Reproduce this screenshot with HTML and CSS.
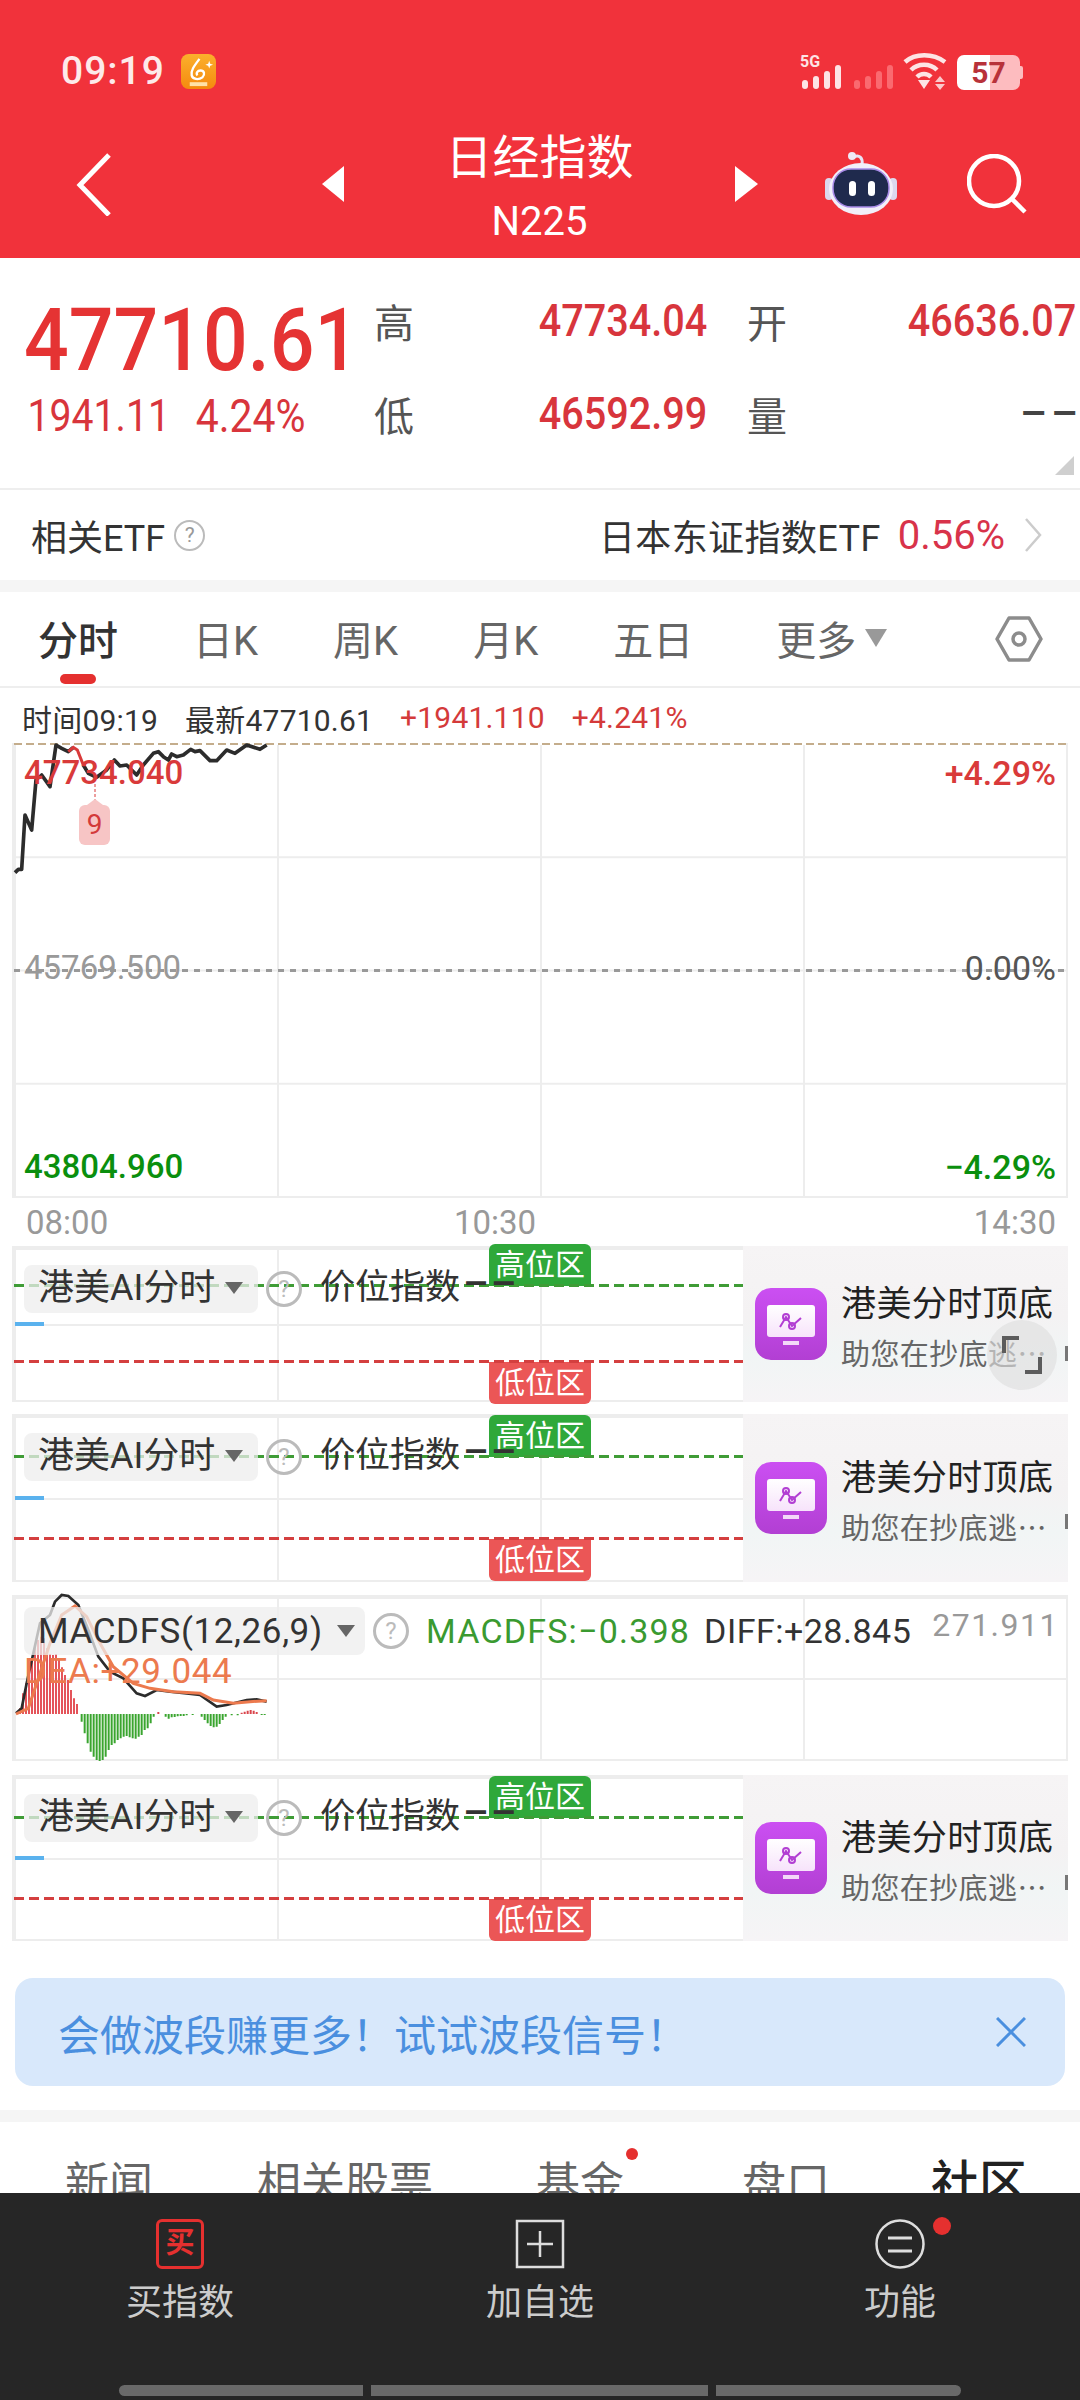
FILE: index.html
```html
<!DOCTYPE html>
<html lang="zh-CN">
<head>
    <meta charset="UTF-8">
    <meta name="viewport" content="width=device-width, initial-scale=1.0">
    <title>日经指数 N225</title>
    <link rel="stylesheet" href="styles.css">
</head>
<body>

    <!-- Red header -->
    <header id="top">
        <div class="status-bar">
            <span class="clock">09:19</span>
            <svg class="app-badge" viewBox="0 0 36 36">
                <defs>
                    <linearGradient id="orange" x1="0" y1="0" x2="0" y2="1">
                        <stop offset="0" stop-color="#fbb02c"/>
                        <stop offset="1" stop-color="#f58a0f"/>
                    </linearGradient>
                </defs>
                <rect width="36" height="36" rx="8" fill="url(#orange)"/>
                <path d="M19 5c-6 8-9 12-8 17 1 4 7 5 11 2 3-3 2-7-2-7-3 0-5 3-3 5" fill="none" stroke="#fff" stroke-width="2.4"/>
                <path d="M29 7l1 3 3 1-3 1-1 3-1-3-3-1 3-1z" fill="#fff"/>
                <rect x="9" y="29" width="18" height="4" fill="#ffe2a8"/>
            </svg>
            <div class="status-icons">
                <div class="signal-wrap">
                    <span class="net-label">5G</span>
                    <div class="signal"><i class="b1"></i><i class="b2"></i><i class="b3"></i><i class="b4"></i></div>
                </div>
                <div class="signal signal-off"><i class="b1"></i><i class="b2"></i><i class="b3"></i><i class="b4"></i></div>
                <svg class="wifi" width="44" height="38" viewBox="0 0 44 38">
                    <g fill="none" stroke="#fde4e5" stroke-width="4.5">
                        <path d="M2 10C12 1 30 1 42 10"/>
                        <path d="M8 18C15 11 27 11 34 18"/>
                        <path d="M14 25C18 21 24 21 28 25"/>
                    </g>
                    <path d="M15 28h12l-6 9z" fill="#fde4e5"/>
                    <path d="M37 24l5 6H32zM37 38l5-6H32z" fill="#fbc9cb"/>
                </svg>
                <div class="battery"><span class="battery-num">57</span></div>
            </div>
        </div>
        <nav class="nav">
            <svg class="back" width="35" height="63" viewBox="0 0 35 63"><path d="M33 2L4 32l29 30" fill="none" stroke="#fff" stroke-width="5"/></svg>
            <span class="arrow arrow-left"></span>
            <div class="nav-title">
                <div class="title-cn">日经指数</div>
                <div class="title-code">N225</div>
            </div>
            <span class="arrow arrow-right"></span>
            <svg class="robot" width="72" height="64" viewBox="0 0 72 64">
                <path d="M29 5c5-3 9 1 8 7" fill="none" stroke="#e8e4f5" stroke-width="3"/>
                <circle cx="27" cy="4" r="4" fill="#efeaf7"/>
                <rect x="0" y="26" width="8" height="22" rx="4" fill="#dcd8ee"/>
                <rect x="64" y="26" width="8" height="22" rx="4" fill="#dcd8ee"/>
                <ellipse cx="36" cy="37" rx="32" ry="26" fill="#f2eff9"/>
                <rect x="8" y="17" width="56" height="38" rx="18" fill="#1f2a4d" stroke="#a98be8" stroke-width="1.5"/>
                <rect x="24" y="29" width="7" height="15" rx="3.5" fill="#fff"/>
                <rect x="43" y="29" width="7" height="15" rx="3.5" fill="#fff"/>
            </svg>
            <svg class="search" width="60" height="60" viewBox="0 0 60 60">
                <circle cx="27" cy="27" r="25" fill="none" stroke="#fff" stroke-width="4.5"/>
                <path d="M44 44l14 14" stroke="#fff" stroke-width="4.5"/>
            </svg>
        </nav>
    </header>

    <!-- Quote -->
    <section class="quote">
        <div class="quote-main">
            <div class="price">47710.61</div>
            <div class="change"><span>1941.11</span><span class="change-pct">4.24%</span></div>
        </div>
        <div class="quote-grid">
            <span class="q-label">高</span><span class="q-value"><b>47734.04</b></span>
            <span class="q-label q-label-2">开</span><span class="q-value"><b>46636.07</b></span>
            <span class="q-label">低</span><span class="q-value"><b>46592.99</b></span>
            <span class="q-label q-label-2">量</span><span class="q-value q-empty">––</span>
        </div>
        <span class="corner"></span>
    </section>

    <!-- ETF row -->
    <section class="etf-row">
        <span class="etf-name">相关ETF</span>
        <span class="help help-small">?</span>
        <span class="etf-fund">日本东证指数ETF</span>
        <span class="etf-pct">0.56%</span>
        <svg class="etf-chevron" width="18" height="34" viewBox="0 0 18 34"><path d="M2 1l14 16L2 33" fill="none" stroke="#ccc" stroke-width="2.5"/></svg>
    </section>

    <div class="gap-bar"></div>

    <!-- Period tabs -->
    <section class="period-tabs">
        <span class="period active">分时</span>
        <span class="period">日K</span>
        <span class="period">周K</span>
        <span class="period">月K</span>
        <span class="period">五日</span>
        <span class="period more">更多<i class="caret caret-big"></i></span>
        <svg class="hex" width="48" height="46" viewBox="0 0 48 46">
            <path d="M14 2h20l12 21-12 21H14L2 23z" fill="none" stroke="#8c8c8c" stroke-width="3.5" stroke-linejoin="round"/>
            <circle cx="24" cy="23" r="6" fill="none" stroke="#8c8c8c" stroke-width="3.5"/>
        </svg>
    </section>

    <section class="info-row">
        <span>时间09:19</span>
        <span>最新47710.61</span>
        <span class="info-red">+1941.110</span>
        <span class="info-red">+4.241%</span>
    </section>

    <!-- Main chart -->
    <section class="chart">
        <div class="top-dash"></div>
        <div class="zero-dash"></div>
        <svg class="price-line" width="400" height="200" viewBox="0 0 1200 600">
            <polyline fill="none" stroke="#2c2c2c" stroke-width="11" stroke-linejoin="round" points="45,548 55,538 65,538 75,375 95,420 108,270 125,255 150,290 168,165 185,175 205,185 220,172"/>
            <polyline fill="none" stroke="#d93a3a" stroke-width="9" points="205,185 220,172 232,180 250,225"/>
            <polyline fill="none" stroke="#2c2c2c" stroke-width="11" stroke-linejoin="round" points="250,225 265,250 290,262 320,240 343,210 360,228 380,225 410,255 430,225 460,190 475,185 490,200 505,210 515,192 530,200 550,195 572,178 585,185 600,182 630,212 650,212 680,180 705,190 740,165 780,178 800,165"/>
            <path d="M285 282V345" stroke="#d93a3a" stroke-width="3" stroke-dasharray="9 6"/>
        </svg>
        <span class="pin">9</span>
        <span class="c-label c-left c-high">47734.040</span>
        <span class="c-label c-right c-high">+4.29%</span>
        <span class="c-label c-left c-mid">45769.500</span>
        <span class="c-label c-right c-mid c-dark">0.00%</span>
        <span class="c-label c-left c-low">43804.960</span>
        <span class="c-label c-right c-low">−4.29%</span>
    </section>

    <div class="axis">
        <span>08:00</span>
        <span class="axis-mid">10:30</span>
        <span>14:30</span>
    </div>

    <!-- Indicator panels -->
    <section class="panel panel-a">
        <span class="badge badge-high">高位区</span>
        <span class="badge badge-low">低位区</span>
        <div class="line line-green"></div>
        <div class="line line-red"></div>
        <div class="blue-mark"></div>
        <div class="panel-head">
            <span class="chip">港美AI分时<i class="caret"></i></span>
            <span class="help">?</span>
            <span class="head-text">价位指数<span class="dashes">––</span></span>
        </div>
        <div class="promo">
            <svg class="promo-icon" viewBox="0 0 72 72"><use href="#promo-art"/></svg>
            <div class="promo-text">
                <div class="promo-title">港美分时顶底</div>
                <div class="promo-sub">助您在抄底逃…</div>
            </div>
            <i class="promo-cut"></i>
        </div>
        <div class="expand">
            <svg width="40" height="40" viewBox="0 0 40 40">
                <path d="M2 18V3h15M38 22v15H23" fill="none" stroke="#5c5c5c" stroke-width="4"/>
            </svg>
        </div>
    </section>

    <section class="panel panel-b">
        <span class="badge badge-high">高位区</span>
        <span class="badge badge-low">低位区</span>
        <div class="line line-green"></div>
        <div class="line line-red"></div>
        <div class="blue-mark"></div>
        <div class="panel-head">
            <span class="chip">港美AI分时<i class="caret"></i></span>
            <span class="help">?</span>
            <span class="head-text">价位指数<span class="dashes">––</span></span>
        </div>
        <div class="promo">
            <svg class="promo-icon" viewBox="0 0 72 72"><use href="#promo-art"/></svg>
            <div class="promo-text">
                <div class="promo-title">港美分时顶底</div>
                <div class="promo-sub">助您在抄底逃…</div>
            </div>
            <i class="promo-cut"></i>
        </div>
    </section>

    <section class="panel panel-macd">
        <svg class="macd-plot" width="500" height="190" viewBox="0 0 1500 570">
            <path fill="none" stroke="#e4545a" stroke-width="6" d="M60 402V385M69 402V340M78 402V310M87 402V270M96 402V240M105 402V205M114 402V180M123 402V170M132 402V175M141 402V205M150 402V222M159 402V225M168 402V222M177 402V240M186 402V262M195 402V285M204 402V300M213 402V330M222 402V355M231 402V372"/>
            <path fill="none" stroke="#3aa52f" stroke-width="6" d="M245 402V425M254 402V460M263 402V490M272 402V515M281 402V530M290 402V540M299 402V543M308 402V540M317 402V530M326 402V510M335 402V495M344 402V490M353 402V480M362 402V475M371 402V470M380 402V468M389 402V472M398 402V475M407 402V476M416 402V470M425 402V465M434 402V450M443 402V445M452 402V430M461 402V410M497 402V410M506 402V416M515 402V412M524 402V411M533 402V409M542 402V408M551 402V408M560 402V406M578 402V405M605 402V410M614 402V420M623 402V430M632 402V438M641 402V442M650 402V440M659 402V432M668 402V420M677 402V410M695 402V406M713 402V406M785 402V405M794 402V405"/>
            <path fill="none" stroke="#d9454c" stroke-width="6" d="M475 402V396M725 402V398M734 402V395M743 402V392M752 402V390M761 402V392M770 402V396"/>
            <polyline fill="none" stroke="#2c2c2c" stroke-width="8" points="48,400 65,385 80,310 100,220 120,130 150,105 165,65 185,45 205,48 235,75 265,150 295,230 330,275 370,295 410,340 435,348 470,330 510,335 560,340 600,345 650,380 680,375 740,360 770,358 800,365"/>
            <polyline fill="none" stroke="#ec7a4e" stroke-width="9" points="48,402 85,385 120,280 150,190 185,105 225,78 260,110 300,190 340,260 400,310 450,325 520,335 600,340 640,360 700,370 750,365 800,362"/>
        </svg>
        <div class="panel-head">
            <span class="chip chip-macd">MACDFS(12,26,9)<i class="caret"></i></span>
            <span class="help">?</span>
            <span class="macd-green">MACDFS:−0.398</span>
            <span class="macd-dark">DIFF:+28.845</span>
        </div>
        <span class="macd-dea">DEA:+29.044</span>
        <span class="macd-max">271.911</span>
    </section>

    <section class="panel panel-c">
        <span class="badge badge-high">高位区</span>
        <span class="badge badge-low">低位区</span>
        <div class="line line-green"></div>
        <div class="line line-red"></div>
        <div class="blue-mark"></div>
        <div class="panel-head">
            <span class="chip">港美AI分时<i class="caret"></i></span>
            <span class="help">?</span>
            <span class="head-text">价位指数<span class="dashes">––</span></span>
        </div>
        <div class="promo">
            <svg class="promo-icon" viewBox="0 0 72 72"><use href="#promo-art"/></svg>
            <div class="promo-text">
                <div class="promo-title">港美分时顶底</div>
                <div class="promo-sub">助您在抄底逃…</div>
            </div>
            <i class="promo-cut"></i>
        </div>
    </section>

    <!-- Tip banner -->
    <section class="banner">
        <span>会做波段赚更多！试试波段信号！</span>
        <svg width="30" height="30" viewBox="0 0 30 30"><path d="M1 1l28 28M29 1L1 29" stroke="#4a8fdf" stroke-width="3"/></svg>
    </section>

    <div class="gap-bar gap-bar-2"></div>

    <!-- News tabs, cut off by the bottom bar -->
    <section class="sub-tabs">
        <span class="sub-tab t-news">新闻</span>
        <span class="sub-tab t-stock">相关股票</span>
        <span class="sub-tab t-fund">基金<i class="dot-small"></i></span>
        <span class="sub-tab t-pan">盘口</span>
        <span class="sub-tab t-community">社区</span>
    </section>

    <!-- Bottom bar -->
    <footer class="bottom-bar">
        <div class="tools">
            <div class="tool">
                <span class="buy-icon">买</span>
                <span class="tool-label">买指数</span>
            </div>
            <div class="tool">
                <svg class="tool-icon" width="50" height="50" viewBox="0 0 50 50">
                    <rect x="2" y="2" width="46" height="46" fill="none" stroke="#ddd" stroke-width="2.5"/>
                    <path d="M25 12v26M12 25h26" stroke="#ddd" stroke-width="2.5"/>
                </svg>
                <span class="tool-label">加自选</span>
            </div>
            <div class="tool">
                <div class="func-icon">
                    <svg class="tool-icon" width="50" height="50" viewBox="0 0 50 50">
                        <circle cx="25" cy="25" r="23.5" fill="none" stroke="#ddd" stroke-width="2.5"/>
                        <path d="M13 19h24M13 32h24" stroke="#ddd" stroke-width="3"/>
                    </svg>
                    <i class="dot-big"></i>
                </div>
                <span class="tool-label">功能</span>
            </div>
        </div>
        <div class="gesture">
            <i class="g1"></i><i class="g2"></i><i class="g3"></i>
        </div>
    </footer>

    <!-- Shared drawing for the purple promo icon -->
    <svg class="defs" width="0" height="0">
        <defs>
            <linearGradient id="purple" x1="0" y1="0" x2="0" y2="1">
                <stop offset="0" stop-color="#cb4ff2"/>
                <stop offset="1" stop-color="#b23fd3"/>
            </linearGradient>
            <linearGradient id="screen" x1="0" y1="0" x2="0" y2="1">
                <stop offset="0" stop-color="#fff"/>
                <stop offset="1" stop-color="#f7e3fb"/>
            </linearGradient>
            <g id="promo-art">
                <rect width="72" height="72" rx="16" fill="url(#purple)"/>
                <rect x="12" y="17" width="48" height="32" rx="3" fill="url(#screen)"/>
                <rect x="28" y="53" width="16" height="4" fill="#f3d8f8"/>
                <path d="M25 39l6-10 6 9 9-8" fill="none" stroke="#b23fd3" stroke-width="2"/>
                <circle cx="31" cy="29" r="3" fill="none" stroke="#b23fd3" stroke-width="2"/>
                <circle cx="37" cy="38" r="3" fill="none" stroke="#b23fd3" stroke-width="2"/>
            </g>
        </defs>
    </svg>

</body>
</html>
```

FILE: styles.css
```css
body {
    margin: 0;
    width: 1080px;
    height: 2400px;
    overflow: hidden;
    background-color: white;
    color: #333;
    font-family: Roboto, "Noto Sans CJK SC", sans-serif;
}

/* Header */
#top {
    height: 258px;
    background-color: #f1323b;
    color: white;
}

.status-bar {
    height: 110px;
    padding: 32px 60px 0 61px;
    display: flex;
    align-items: center;
    box-sizing: border-box;
}

.clock {
    font-size: 39px;
    font-weight: 500;
    letter-spacing: 1px;
    color: #fdeaea;
}

.app-badge {
    width: 35px;
    height: 35px;
    margin-left: 16px;
}

.status-icons {
    margin-left: auto;
    display: flex;
    align-items: flex-end;
    height: 38px;
}

.signal-wrap {
    position: relative;
}

.net-label {
    position: absolute;
    left: -2px;
    top: -11px;
    font-size: 16px;
    font-weight: 700;
    color: #fde4e5;
    line-height: 16px;
}

.signal {
    display: flex;
    align-items: flex-end;
    gap: 5px;
    height: 24px;
    margin-bottom: 1px;
}

.signal i {
    width: 6px;
    border-radius: 3px;
    background-color: #fde4e5;
}

.signal .b1 { height: 9px; }
.signal .b2 { height: 13px; }
.signal .b3 { height: 18px; }
.signal .b4 { height: 24px; }

.signal-off {
    margin-left: 13px;
}

.signal-off i {
    background-color: #fa6a70;
}

.wifi {
    margin-left: 10px;
}

.battery {
    position: relative;
    width: 63px;
    height: 35px;
    margin-left: 10px;
    border-radius: 7px;
    background: linear-gradient(to right, #fff 52%, #fdbcbf 52%);
}

.battery::after {
    content: '';
    position: absolute;
    right: -3px;
    top: 11px;
    width: 3px;
    height: 13px;
    border-radius: 0 2px 2px 0;
    background-color: #fdbcbf;
}

.battery-num {
    display: block;
    text-align: center;
    font-size: 30px;
    line-height: 35px;
    font-weight: 700;
    color: #b8323a;
}

.nav {
    height: 148px;
    padding-left: 76px;
    display: flex;
    align-items: center;
}

.back {
    margin-right: 211px;
}

.arrow {
    width: 0;
    height: 0;
    border-top: 18px solid transparent;
    border-bottom: 18px solid transparent;
}

.arrow-left {
    border-right: 22px solid white;
}

.arrow-right {
    border-left: 23px solid white;
    margin-right: 67px;
}

.nav-title {
    width: 391px;
    padding-top: 12px;
    text-align: center;
}

.title-cn {
    font-size: 47px;
    line-height: 64px;
}

.title-code {
    font-size: 40px;
    line-height: 64px;
}

.robot {
    margin-right: 70px;
}

/* Quote */
.quote {
    position: relative;
    height: 232px;
    box-sizing: border-box;
    display: flex;
    border-bottom: 2px solid #eee;
}

.quote-main {
    width: 374px;
    box-sizing: border-box;
    padding: 37px 0 0 24px;
}

.price {
    font-size: 88px;
    line-height: 90px;
    font-weight: 500;
    color: #e53333;
    transform: scaleX(0.895);
    transform-origin: left;
}

.change {
    display: flex;
    gap: 29px;
    padding-left: 4px;
    font-size: 44px;
    line-height: 62px;
    color: #d8353c;
    transform: scaleX(0.89);
    transform-origin: left;
    white-space: nowrap;
}

.change-pct {
    font-size: 46px;
}

.quote-grid {
    display: grid;
    grid-template-columns: 41px 292px 80px 289px;
    grid-auto-rows: 93px;
    padding-top: 16px;
    align-items: center;
}

.q-label {
    font-size: 40px;
    color: #555;
}

.q-label-2 {
    padding-left: 40px;
}

.q-value {
    text-align: right;
    font-size: 44px;
    color: #d8353c;
}

.q-value b {
    display: inline-block;
    font-weight: 500;
    transform: scaleX(0.9);
    transform-origin: right;
}

.q-empty {
    font-size: 42px;
    font-weight: 500;
    color: #444;
    letter-spacing: 4px;
    margin-right: -6px;
}

.corner {
    position: absolute;
    right: 6px;
    bottom: 13px;
    width: 0;
    height: 0;
    border-left: 19px solid transparent;
    border-bottom: 19px solid #cfcfcf;
}

/* ETF row */
.etf-row {
    height: 90px;
    padding: 0 38px 0 31px;
    display: flex;
    align-items: center;
    font-size: 36px;
}

.etf-name {
    margin-right: 9px;
}

.etf-fund {
    margin-left: auto;
    letter-spacing: 0.4px;
}

.etf-pct {
    margin-left: 17px;
    margin-right: 19px;
    font-size: 40px;
    color: #d8334a;
}

.help {
    box-sizing: border-box;
    width: 36px;
    height: 36px;
    border: 3px solid #bbb;
    border-radius: 50%;
    display: inline-flex;
    align-items: center;
    justify-content: center;
    color: #bbb;
    font-size: 24px;
    flex: none;
}

.help-small {
    width: 31px;
    height: 31px;
    border-width: 2px;
    font-size: 21px;
    color: #999;
}

.gap-bar {
    height: 12px;
    background-color: #f5f5f5;
}

.gap-bar-2 {
    margin-top: 24px;
}

/* Period tabs */
.period-tabs {
    position: relative;
    height: 96px;
    box-sizing: border-box;
    padding: 0 37px 0 38px;
    display: flex;
    align-items: center;
    gap: 75px;
    border-bottom: 2px solid #eee;
    font-size: 40px;
    color: #666;
}

.period {
    position: relative;
    margin-top: -2px;
}

.period.active {
    color: #333;
    font-weight: 500;
}

.period.active::after {
    content: '';
    position: absolute;
    left: 22px;
    bottom: -17px;
    width: 36px;
    height: 10px;
    border-radius: 5px;
    background-color: #e5302f;
}

.more {
    margin-left: 8px;
    display: flex;
    align-items: center;
}

.hex {
    margin-left: auto;
}

.caret {
    display: inline-block;
    margin-left: 12px;
    width: 0;
    height: 0;
    border-left: 9px solid transparent;
    border-right: 9px solid transparent;
    border-top: 12px solid #666;
}

.caret-big {
    border-left-width: 11px;
    border-right-width: 11px;
    border-top: 18px solid #999;
    margin-left: 9px;
}

.info-row {
    height: 55px;
    padding: 4px 0 0 22px;
    box-sizing: border-box;
    display: flex;
    align-items: center;
    gap: 27px;
    font-size: 30px;
    letter-spacing: 0.2px;
}

.info-red {
    color: #d43a3a;
}

/* Chart frame and grid shared by all plots */
.chart,
.panel {
    position: relative;
    margin-left: 12px;
    width: 1056px;
    box-sizing: border-box;
    border: 2px solid #ededed;
    background-image: linear-gradient(to right, #ededed 2px, transparent 2px), linear-gradient(to bottom, #ededed 2px, transparent 2px);
}

.chart {
    height: 455px;
    border-top: none;
    background-size: 25% 25%;
}

.top-dash {
    height: 2px;
    background-image: repeating-linear-gradient(to right, #c4ad8c 0 8px, white 8px 12px);
}

.zero-dash {
    position: absolute;
    left: 0;
    right: 0;
    top: 226px;
    height: 3px;
    background-image: repeating-linear-gradient(to right, #999 0 6px, transparent 6px 12px);
}

.price-line {
    position: absolute;
    left: -14px;
    top: -53px;
}

.pin {
    position: absolute;
    left: 65px;
    top: 62px;
    width: 31px;
    height: 40px;
    border-radius: 6px;
    background-color: #f7c5c5;
    color: #d33a3a;
    font-size: 28px;
    line-height: 40px;
    text-align: center;
}

.pin::before {
    content: '';
    position: absolute;
    left: 8px;
    top: -6px;
    width: 0;
    height: 0;
    border-left: 8px solid transparent;
    border-right: 8px solid transparent;
    border-bottom: 6px solid #f7c5c5;
}

.c-label {
    position: absolute;
    font-size: 33px;
    line-height: 40px;
}

.c-left { left: 10px; }

.c-right {
    right: 10px;
    font-size: 34px;
}

.c-high { top: 10px; color: #d93a3a; font-weight: 500; }
.c-mid { top: 205px; color: #999; }
.c-low { top: 404px; color: #0a8f0e; font-weight: 500; }
.c-dark { color: #555; }

.axis {
    height: 48px;
    padding: 0 24px 0 26px;
    display: flex;
    justify-content: space-between;
    align-items: center;
    font-size: 33px;
    color: #999;
}

.axis-mid {
    margin-right: 92px;
}

/* Indicator panels */
.panel {
    background-size: 25% 50%;
}

.panel-a { height: 156px; }

.panel-b {
    height: 168px;
    margin-top: 12px;
}

.panel-macd {
    height: 166px;
    margin-top: 13px;
}

.panel-c {
    height: 166px;
    margin-top: 14px;
}

.line {
    position: absolute;
    left: 0;
    right: 0;
    height: 3px;
}

.line-green {
    top: 25%;
    margin-top: -2px;
    background-image: repeating-linear-gradient(to right, #3f9c36 0 10px, transparent 10px 15px);
}

.line-red {
    top: 75%;
    margin-top: -2px;
    background-image: repeating-linear-gradient(to right, #d43f3f 0 10px, transparent 10px 15px);
}

.blue-mark {
    position: absolute;
    left: 1px;
    top: 50%;
    width: 29px;
    height: 4px;
    margin-top: -2px;
    background-color: #5ab2ee;
}

.badge {
    position: absolute;
    left: 475px;
    width: 102px;
    height: 42px;
    color: white;
    font-size: 30px;
    line-height: 42px;
    text-align: center;
}

.badge-high {
    bottom: 75%;
    border-radius: 6px 6px 0 0;
    background-color: #2fa83a;
}

.badge-low {
    top: 75%;
    border-radius: 0 0 6px 6px;
    background-color: #eb5656;
}

.panel-head {
    position: absolute;
    left: 10px;
    top: 10px;
    display: flex;
    align-items: center;
    white-space: nowrap;
}

.chip {
    box-sizing: border-box;
    width: 234px;
    height: 48px;
    padding: 0 0 10px 14px;
    display: flex;
    align-items: center;
    border-radius: 8px;
    background-color: rgba(238, 238, 238, 0.75);
    font-size: 36px;
}

.chip .caret {
    margin-left: 10px;
    margin-top: 8px;
}

.panel-head .help {
    margin-left: 8px;
}

.head-text {
    margin-left: 18px;
    padding-bottom: 10px;
    font-size: 35px;
}

.dashes {
    margin-left: 3px;
    font-size: 40px;
    font-weight: 500;
    line-height: 0;
    letter-spacing: 2px;
    vertical-align: 2px;
}

.promo {
    position: absolute;
    left: 729px;
    right: -2px;
    top: -2px;
    bottom: -2px;
    padding-left: 12px;
    display: flex;
    align-items: center;
    gap: 14px;
    background: linear-gradient(to bottom, #f6f4f5, #f4f2f3 45%, #f1f5f5 70%, #f6f4f6);
}

.promo-icon {
    width: 72px;
    height: 72px;
    flex: none;
}

.promo-text {
    margin-top: 5px;
    white-space: nowrap;
}

.promo-title {
    font-size: 35px;
    line-height: 50px;
    letter-spacing: 0.4px;
    color: #222;
}

.promo-sub {
    font-family: "Noto Sans CJK SC", sans-serif;
    font-size: 29px;
    line-height: 44px;
    letter-spacing: 0.4px;
    color: #666;
}

.promo-cut {
    position: absolute;
    right: 0;
    top: 100px;
    width: 3px;
    height: 15px;
    background-color: #777;
}

.expand {
    position: absolute;
    left: 973px;
    top: 72px;
    width: 70px;
    height: 70px;
    border-radius: 50%;
    background-color: rgba(222, 222, 222, 0.65);
    display: flex;
    align-items: center;
    justify-content: center;
}

/* MACD panel */
.macd-plot {
    position: absolute;
    left: -14px;
    top: -17px;
}

.chip-macd {
    width: 341px;
    padding-bottom: 0;
    font-size: 35px;
    letter-spacing: 0.6px;
}

.chip-macd .caret {
    margin: 0 0 0 14px;
}

.macd-green {
    margin-left: 17px;
    font-size: 34px;
    letter-spacing: 1.2px;
    color: #3a9a30;
}

.macd-dark {
    margin-left: 14px;
    font-size: 34px;
    letter-spacing: 0.5px;
}

.macd-dea {
    position: absolute;
    left: 10px;
    top: 54px;
    font-size: 35px;
    letter-spacing: 0.6px;
    color: #ec7a4e;
}

.macd-max {
    position: absolute;
    right: 7px;
    top: 9px;
    font-size: 32px;
    letter-spacing: 1.5px;
    color: #999;
}

/* Banner */
.banner {
    margin: 37px 15px 0;
    height: 108px;
    padding: 0 39px 0 43px;
    display: flex;
    align-items: center;
    justify-content: space-between;
    border-radius: 18px;
    background-color: #d8e8fb;
    color: #4a8fdf;
    font-size: 42px;
}

/* Sub tabs */
.sub-tabs {
    position: relative;
    padding-top: 32px;
    display: flex;
    font-size: 44px;
    line-height: 60px;
    color: #666;
}

.sub-tab {
    position: relative;
}

.t-news { margin-left: 65px; }
.t-stock { margin-left: 104px; }
.t-fund { margin-left: 103px; }
.t-pan { margin-left: 118px; }

.t-community {
    margin-left: 101px;
    font-size: 48px;
    font-weight: 500;
    color: #222;
}

.dot-small {
    position: absolute;
    right: -14px;
    top: -6px;
    width: 12px;
    height: 12px;
    border-radius: 50%;
    background-color: #e5302f;
}

/* Bottom bar */
.bottom-bar {
    position: fixed;
    left: 0;
    right: 0;
    bottom: 0;
    height: 207px;
    background-color: #262626;
}

.tools {
    display: grid;
    grid-template-columns: repeat(3, 1fr);
    width: 1080px;
    padding-top: 26px;
}

.tool {
    display: flex;
    flex-direction: column;
    align-items: center;
}

.tool-icon {
    display: block;
}

.tool-label {
    margin-top: 8px;
    font-size: 36px;
    line-height: 52px;
    color: #ccc;
}

.buy-icon {
    box-sizing: border-box;
    width: 48px;
    height: 50px;
    border: 3px solid #e5302f;
    border-radius: 6px;
    color: #e5302f;
    font-size: 29px;
    line-height: 42px;
    font-weight: 700;
    text-align: center;
}

.func-icon {
    position: relative;
}

.dot-big {
    position: absolute;
    left: 58px;
    top: -2px;
    width: 18px;
    height: 18px;
    border-radius: 50%;
    background-color: #e5302f;
}

.gesture {
    position: absolute;
    left: 119px;
    bottom: 4px;
    display: flex;
    gap: 8px;
}

.gesture i {
    height: 11px;
    background-color: #696969;
}

.g1 { width: 244px; border-radius: 6px 0 0 6px; }
.g2 { width: 337px; }
.g3 { width: 245px; border-radius: 0 6px 6px 0; }

.defs {
    position: absolute;
}
```
